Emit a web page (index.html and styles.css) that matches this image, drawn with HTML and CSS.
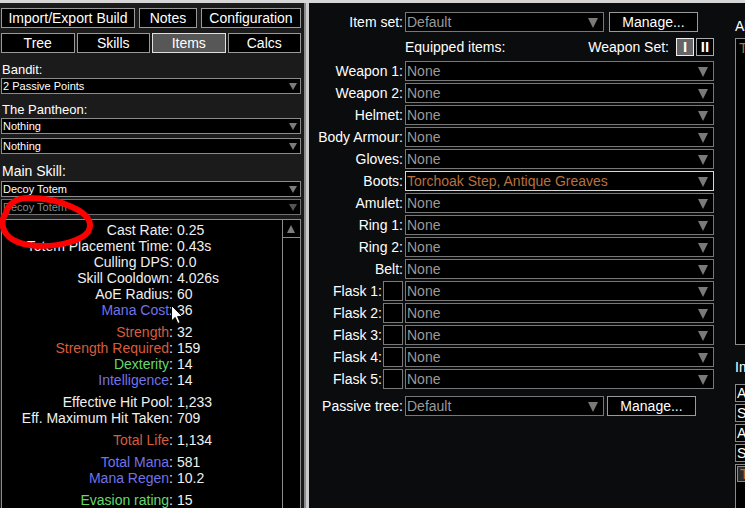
FILE: index.html
```html
<!DOCTYPE html>
<html lang="en">
<head>
  <meta charset="UTF-8">
  <title>Path of Building - Items</title>
  <link rel="stylesheet" href="styles.css">
</head>
<body>
<div class="topbar"></div>
<div class="app">
  <div class="left">
    <div class="btn-row top-row">
      <div class="btn">Import/Export Build</div>
      <div class="btn">Notes</div>
      <div class="btn">Configuration</div>
    </div>
    <div class="btn-row tab-row">
      <div class="btn">Tree</div>
      <div class="btn">Skills</div>
      <div class="btn active">Items</div>
      <div class="btn">Calcs</div>
    </div>

    <div class="field-label">Bandit:</div>
    <div class="dd">2 Passive Points</div>
    <div class="field-label pantheon">The Pantheon:</div>
    <div class="dd">Nothing</div>
    <div class="dd second">Nothing</div>
    <div class="field-label main-skill">Main Skill:</div>
    <div class="dd skill">Decoy Totem</div>
    <div class="dd second disabled">Decoy Totem</div>

    <div class="stats">
      <div class="stats-list">
        <div class="stat"><span class="stat-label">Cast Rate:</span><span class="stat-value">0.25</span></div>
        <div class="stat"><span class="stat-label">Totem Placement Time:</span><span class="stat-value">0.43s</span></div>
        <div class="stat"><span class="stat-label">Culling DPS:</span><span class="stat-value">0.0</span></div>
        <div class="stat"><span class="stat-label">Skill Cooldown:</span><span class="stat-value">4.026s</span></div>
        <div class="stat"><span class="stat-label">AoE Radius:</span><span class="stat-value">60</span></div>
        <div class="stat"><span class="stat-label"><span class="mana">Mana Cost</span>:</span><span class="stat-value">36</span></div>

        <div class="stat gap"><span class="stat-label"><span class="str">Strength</span>:</span><span class="stat-value">32</span></div>
        <div class="stat"><span class="stat-label"><span class="str">Strength Required</span>:</span><span class="stat-value">159</span></div>
        <div class="stat"><span class="stat-label"><span class="dex">Dexterity</span>:</span><span class="stat-value">14</span></div>
        <div class="stat"><span class="stat-label"><span class="mana">Intelligence</span>:</span><span class="stat-value">14</span></div>

        <div class="stat gap"><span class="stat-label">Effective Hit Pool:</span><span class="stat-value">1,233</span></div>
        <div class="stat"><span class="stat-label">Eff. Maximum Hit Taken:</span><span class="stat-value">709</span></div>

        <div class="stat gap"><span class="stat-label"><span class="str">Total Life</span>:</span><span class="stat-value">1,134</span></div>

        <div class="stat gap"><span class="stat-label"><span class="mana">Total Mana</span>:</span><span class="stat-value">581</span></div>
        <div class="stat"><span class="stat-label"><span class="mana">Mana Regen</span>:</span><span class="stat-value">10.2</span></div>

        <div class="stat gap"><span class="stat-label"><span class="dex">Evasion rating</span>:</span><span class="stat-value">15</span></div>
      </div>
      <div class="scrollbar"><div class="scroll-up"></div></div>
    </div>

    <!-- hand drawn marker over the screenshot -->
    <svg class="scribble" width="100" height="64" viewBox="0 0 100 64">
      <path d="M6 23 C8 14, 16 8, 28 8 C45 8, 60 11, 72 17 C86 23, 94 32, 88 42 C82 50, 62 56, 42 56 C22 56, 8 50, 4 40 C1 33, 3 27, 6 23" fill="none" stroke="#f00" stroke-width="6" stroke-linecap="round"/>
    </svg>
    <svg class="cursor" width="13" height="20" viewBox="0 0 13 20">
      <path d="M0.5 0.5 V16 L4.2 12.4 L6.8 18.5 L9.2 17.5 L6.6 11.6 L11.5 11.6 Z" fill="#fff" stroke="#000"/>
    </svg>
  </div>

  <div class="splitter"></div>

  <div class="right">
    <div class="items-main">
      <div class="row">
        <div class="row-label">Item set:</div>
        <div class="dd big short">Default</div>
        <div class="mbtn">Manage...</div>
      </div>
      <div class="equipped">
        <span>Equipped items:</span>
        <div class="weapon-set">
          <span>Weapon Set:</span>
          <div class="ws-btn active">I</div>
          <div class="ws-btn">II</div>
        </div>
      </div>

      <div class="row slot first-slot"><div class="row-label">Weapon 1:</div><div class="dd big">None</div></div>
      <div class="row slot"><div class="row-label">Weapon 2:</div><div class="dd big">None</div></div>
      <div class="row slot"><div class="row-label">Helmet:</div><div class="dd big">None</div></div>
      <div class="row slot"><div class="row-label">Body Armour:</div><div class="dd big">None</div></div>
      <div class="row slot"><div class="row-label">Gloves:</div><div class="dd big">None</div></div>
      <div class="row slot"><div class="row-label">Boots:</div><div class="dd big unique hover">Torchoak Step, Antique Greaves</div></div>
      <div class="row slot"><div class="row-label">Amulet:</div><div class="dd big">None</div></div>
      <div class="row slot"><div class="row-label">Ring 1:</div><div class="dd big">None</div></div>
      <div class="row slot"><div class="row-label">Ring 2:</div><div class="dd big">None</div></div>
      <div class="row slot"><div class="row-label">Belt:</div><div class="dd big">None</div></div>
      <div class="row slot"><div class="row-label flask">Flask 1:<span class="flask-box"></span></div><div class="dd big">None</div></div>
      <div class="row slot"><div class="row-label flask">Flask 2:<span class="flask-box"></span></div><div class="dd big">None</div></div>
      <div class="row slot"><div class="row-label flask">Flask 3:<span class="flask-box"></span></div><div class="dd big">None</div></div>
      <div class="row slot"><div class="row-label flask">Flask 4:<span class="flask-box"></span></div><div class="dd big">None</div></div>
      <div class="row slot"><div class="row-label flask">Flask 5:<span class="flask-box"></span></div><div class="dd big">None</div></div>

      <div class="row passive">
        <div class="row-label">Passive tree:</div>
        <div class="dd big short">Default</div>
        <div class="mbtn narrow">Manage...</div>
      </div>
    </div>

    <div class="items-side">
      <div class="side-label">All items:</div>
      <div class="side-list">
        <div class="side-item unique">Torchoak Step, Antique Greaves</div>
      </div>
      <div class="side-label import">Import from website:</div>
      <div class="side-box">All leagues</div>
      <div class="side-box">Sort by name</div>
      <div class="side-box">Any slot</div>
      <div class="side-box">Search</div>
      <div class="side-box list">
        <div class="side-item unique boxed">Torchoak Step</div>
      </div>
    </div>
  </div>
</div>
</body>
</html>
```

FILE: styles.css
```css
* {
  margin: 0;
  padding: 0;
  box-sizing: border-box;
}

html, body {
  height: 100%;
  overflow: hidden;
}

body {
  background: #0b0c0e;
  color: #fff;
  font-family: "Liberation Sans", Arial, sans-serif;
  font-size: 14px;
}

.topbar {
  height: 3px;
  background: #d6d6d6;
}

.app {
  display: flex;
  height: 505px;
}

/* left side bar */
.left {
  position: relative;
  width: 304px;
  flex: none;
  background: #1b1b1b;
  padding: 5px 3px 0 1px;
  overflow: hidden;
}

.btn-row {
  display: grid;
  height: 20px;
}
.top-row {
  grid-template-columns: 134px 58px 100px;
  column-gap: 4px;
}
.tab-row {
  grid-template-columns: repeat(4, 1fr);
  column-gap: 2px;
  margin-top: 5px;
}

.btn {
  background: #000;
  border: 1px solid #9a9a9a;
  text-align: center;
  line-height: 18px;
  font-size: 14px;
  white-space: nowrap;
}
.btn.active {
  background: #575757;
  border-color: #e0e0e0;
}

.field-label {
  margin-top: 9px;
  height: 16px;
  line-height: 16px;
  font-size: 13px;
  padding-left: 1px;
}
.field-label.pantheon {
  margin-top: 8px;
}
.field-label.main-skill {
  margin-top: 8px;
  height: 18px;
  line-height: 18px;
  font-size: 14px;
}

.dd {
  position: relative;
  height: 16px;
  background: #000;
  border: 1px solid #8c8c8c;
  font-size: 11px;
  line-height: 14px;
  padding-left: 1px;
  white-space: nowrap;
  overflow: hidden;
}
.dd::after {
  content: "";
  position: absolute;
  right: 3px;
  top: 4px;
  border-left: 4px solid transparent;
  border-right: 4px solid transparent;
  border-top: 7px solid #7c7c7c;
}
.dd.second {
  margin-top: 4px;
}
.dd.skill {
  margin-top: 1px;
}
.dd.disabled {
  margin-top: 2px;
  color: #8a8a8a;
  border-color: #707070;
}
.dd.disabled::after {
  border-top-color: #555;
}

.stats {
  display: flex;
  margin-top: 4px;
  height: 300px;
  background: #000;
  border: 1px solid #8c8c8c;
}
.stats-list {
  flex: 1;
  padding-top: 2px;
}
.stat {
  display: flex;
  height: 16px;
  line-height: 16px;
  color: #f0f0f0;
  white-space: nowrap;
}
.stat.gap {
  margin-top: 6px;
}
.stat-label {
  width: 171px;
  flex: none;
  text-align: right;
}
.stat-value {
  padding-left: 4px;
}
.mana { color: #7272ea; }
.str { color: #d85c3c; }
.dex { color: #64d86c; }

.scrollbar {
  width: 18px;
  border-left: 1px solid #8c8c8c;
}
.scroll-up {
  position: relative;
  height: 18px;
  border-bottom: 1px solid #8c8c8c;
}
.scroll-up::after {
  content: "";
  position: absolute;
  left: 4px;
  top: 5px;
  border-left: 4px solid transparent;
  border-right: 4px solid transparent;
  border-bottom: 8px solid #7c7c7c;
}

.scribble {
  position: absolute;
  left: 0;
  top: 187px;
  overflow: visible;
}
.cursor {
  position: absolute;
  left: 171px;
  top: 302px;
}

.splitter {
  width: 5px;
  flex: none;
  background: #cbcbcb;
  border-left: 2px solid #8a8a8a;
}

/* items tab */
.right {
  flex: 1;
  display: flex;
  padding-top: 9px;
  overflow: hidden;
}
.items-main {
  width: 426px;
  flex: none;
}

.row {
  display: flex;
  align-items: center;
  height: 20px;
}
.row-label {
  width: 94px;
  flex: none;
  margin-right: 2px;
  text-align: right;
  white-space: nowrap;
}
.row-label.flask {
  display: flex;
  justify-content: flex-end;
  align-items: center;
}
.flask-box {
  width: 20px;
  height: 20px;
  margin-left: 1px;
  border: 1px solid #7a7a7a;
  background: #000;
}

.dd.big {
  width: 309px;
  height: 20px;
  font-size: 14px;
  line-height: 18px;
  color: #9a9a9a;
  border-color: #777;
}
.dd.big::after {
  right: 5px;
  top: 5px;
  border-left-width: 5px;
  border-right-width: 5px;
  border-top-width: 10px;
  border-top-color: #7a7a7a;
}
.dd.big.short {
  width: 199px;
}
.dd.unique {
  color: #b8703f;
}
.dd.hover {
  border-color: #d8d8d8;
}

.mbtn {
  width: 89px;
  height: 20px;
  margin-left: 5px;
  background: #000;
  border: 1px solid #9a9a9a;
  text-align: center;
  line-height: 18px;
}
.mbtn.narrow {
  margin-left: 3px;
}

.equipped {
  display: flex;
  justify-content: space-between;
  align-items: center;
  height: 18px;
  width: 309px;
  margin: 6px 0 0 96px;
  line-height: 18px;
}
.weapon-set {
  display: flex;
  align-items: center;
}
.weapon-set span {
  margin-right: 5px;
}
.ws-btn {
  width: 18px;
  height: 18px;
  margin-left: 2px;
  background: #000;
  border: 1px solid #aaa;
  text-align: center;
  font-weight: bold;
  font-size: 15px;
  line-height: 16px;
}
.ws-btn.active {
  background: #666;
  border-color: #eee;
}

.slot {
  margin-top: 2px;
}
.slot.first-slot {
  margin-top: 5px;
}
.passive {
  margin-top: 7px;
}

.items-side {
  width: 220px;
  flex: none;
}
.side-label {
  margin-top: 6px;
  height: 16px;
  line-height: 16px;
  white-space: nowrap;
}
.side-label.import {
  margin-top: 14px;
}
.side-list {
  margin-top: 4px;
  height: 307px;
  background: #000;
  border: 1px solid #8a8a8a;
  padding: 1px 3px;
}
.side-item {
  height: 16px;
  line-height: 16px;
  white-space: nowrap;
}
.side-item.unique {
  color: #b8703f;
}
.side-box {
  height: 18px;
  margin-top: 2px;
  background: #000;
  border: 1px solid #8a8a8a;
  padding-left: 1px;
  line-height: 16px;
  white-space: nowrap;
}
.side-label.import + .side-box {
  margin-top: 9px;
}
.side-box.list {
  height: 60px;
  padding: 1px;
}
.side-item.boxed {
  border: 1px solid #8a8a8a;
  background: #2a2a2a;
  padding-left: 2px;
  height: 16px;
  line-height: 14px;
}
```
